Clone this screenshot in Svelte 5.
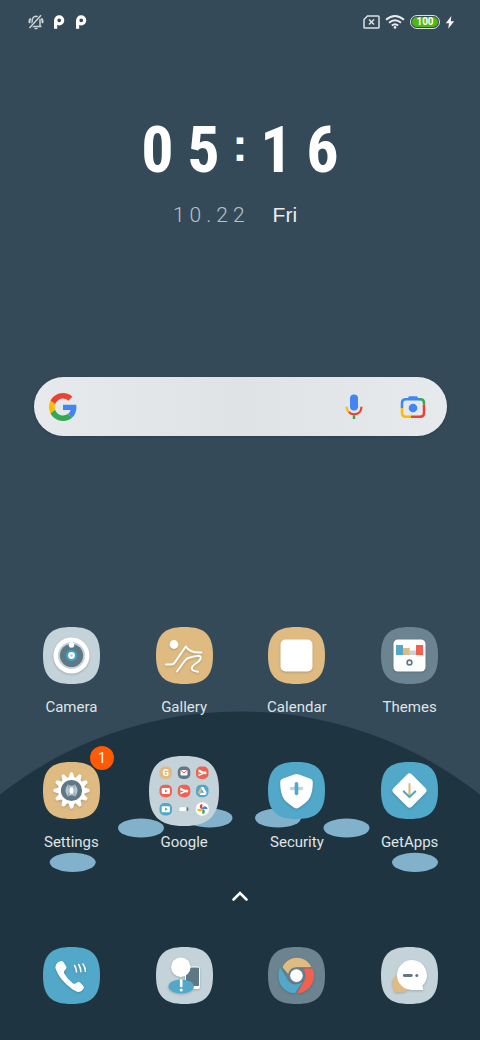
<script>
  const apps = [
    { id: 'camera', label: 'Camera' },
    { id: 'gallery', label: 'Gallery' },
    { id: 'calendar', label: 'Calendar' },
    { id: 'themes', label: 'Themes' },
    { id: 'settings', label: 'Settings', badge: 1 },
    { id: 'google', label: 'Google' },
    { id: 'security', label: 'Security' },
    { id: 'getapps', label: 'GetApps' }
  ];
  const dock = ['phone', 'contacts', 'chrome', 'messages'];
  const tints = {
    camera: '#c4d3d9', gallery: '#dfbb82', calendar: '#dfbb82', themes: '#6b8490',
    settings: '#dfbb82', security: '#52a8c8', getapps: '#52a8c8', phone: '#52a8c8',
    contacts: '#c4d3d9', chrome: '#6b8490', messages: '#c4d3d9'
  };
  const teeth = Array.from({ length: 12 }, (_, i) => i * 30);
  const time = ['0', '5', ':', '1', '6'];
  const date = ['1', '0', '.', '2', '2'];
</script>

{#snippet playTri(x, y)}
  <g transform="translate({x} {y})">
    <path d="M-3.5-3.5L4 0L-3.5 3.5z" fill="#fff" />
    <path d="M-3.5-.8L0 .6L-3.5 1.6z" fill="#f2604f" />
    <circle cx="3" cy="0" r="1.500" fill="#fff" />
  </g>
{/snippet}

{#snippet icon(id)}
  {#if id === 'google'}
    <svg width="70" height="70" viewBox="0 0 70 70" aria-hidden="true">
      <path d="M35 0C60 0 70 10 70 35S60 70 35 70S0 60 0 35S10 0 35 0z" fill="#c4d3d9" />
      <rect x="10.5" y="10.5" width="12.5" height="12.5" rx="5" fill="#dfbb82" />
      <text x="16.8" y="20.2" text-anchor="middle" class="mini-g">G</text>
      <rect x="28.8" y="10.5" width="12.5" height="12.5" rx="5" fill="#5f7886" />
      <rect x="31.5" y="14" width="7" height="5.4" rx=".8" fill="#fff" />
      <path d="M31.7 14.3l3.3 2.6l3.3-2.6" fill="none" stroke="#f2604f" stroke-width="1" />
      <rect x="47" y="10.5" width="12.5" height="12.5" rx="5" fill="#f2604f" />
      {@render playTri(53, 16.8)}
      <rect x="10.5" y="28.8" width="12.5" height="12.5" rx="5" fill="#f2604f" />
      <rect x="12.7" y="32" width="8.2" height="6" rx="1.2" fill="#fff" />
      <path d="M16 33.6l2.6 1.4l-2.6 1.4z" fill="#f2604f" />
      <rect x="28.8" y="28.8" width="12.5" height="12.5" rx="5" fill="#f2604f" />
      {@render playTri(34.8, 35)}
      <rect x="47" y="28.8" width="12.5" height="12.5" rx="5" fill="#52a8c8" />
      <path d="M51.8 31h2.6l3.4 5.8h-2.8z" fill="#fff" />
      <path d="M51.8 31l1.4 2.4l-2.8 5l-1.5-2z" fill="#dfbb82" />
      <path d="M51.8 36.8h6l-1.4 2.2h-5.8z" fill="#fff" />
      <rect x="10.5" y="47" width="12.5" height="12.5" rx="5" fill="#52a8c8" />
      <rect x="12.7" y="50.2" width="8.2" height="6" rx="1" fill="#fff" />
      <path d="M16 51.6l2.8 1.6l-2.8 1.6z" fill="#52a8c8" />
      <rect x="30.5" y="51.3" width="6.5" height="3.6" rx=".6" fill="#fff" />
      <rect x="37.7" y="51.3" width="1.6" height="3.6" rx=".6" fill="#5f7886" />
      <circle cx="53.3" cy="53" r="6.7" fill="#fff" />
      <path d="M53.3 53v-5a2.5 2.5 0 0 0 0 5z" fill="#ea4335" transform="rotate(90 53.3 53)" />
      <path d="M53.3 53v-5a2.5 2.5 0 0 0 0 5z" fill="#ea4335" />
      <path d="M53.3 53v-5a2.5 2.5 0 0 0 0 5z" fill="#4285f4" transform="rotate(90 53.3 53)" />
      <path d="M53.3 53v-5a2.5 2.5 0 0 0 0 5z" fill="#34a853" transform="rotate(180 53.3 53)" />
      <path d="M53.3 53v-5a2.5 2.5 0 0 0 0 5z" fill="#fbbc04" transform="rotate(270 53.3 53)" />
    </svg>
  {:else}
    <svg width="57" height="57" viewBox="0 0 57 57" aria-hidden="true">
      <path d="M28.5 0C49 0 57 8 57 28.5S49 57 28.5 57S0 49 0 28.5S8 0 28.5 0z" fill={tints[id]} />
      <g class="lift">
        {#if id === 'camera'}
          <circle cx="28.5" cy="28.5" r="18" fill="#fff" />
          <circle cx="28.5" cy="28.5" r="13.6" fill="#c4d3d9" />
          <circle cx="28.5" cy="28.5" r="11.6" fill="#5f7886" />
          <circle cx="28.5" cy="28.5" r="5.8" fill="#3f9fc2" />
          <circle cx="28.5" cy="28.5" r="3.4" fill="#fff" />
          <circle cx="28.5" cy="28.5" r="1.2" fill="#a7cfdf" />
          <circle cx="28.5" cy="18" r="2.8" fill="#fff" />
        {:else if id === 'gallery'}
          <circle cx="18" cy="17.5" r="4.4" fill="#fff" />
          <g fill="none" stroke="#fff" stroke-width="2" stroke-linecap="round" stroke-linejoin="round">
            <path d="M10 37.5h5.500q2 0 3-1.600L29.800 19.500Q33.500 26 45.500 25.500" />
            <path d="M21 44.500L29 33.500Q31 31 34 30.500Q44 27.500 44.700 30C46 35 35.500 37 35.700 41.500Q36 44 42 44.700" />
          </g>
        {:else if id === 'calendar'}
          <rect x="12.5" y="12.5" width="32" height="32" rx="5" fill="#fff" />
        {:else if id === 'themes'}
          <rect x="12.5" y="12.5" width="32" height="32" rx="4.5" fill="#fff" />
          <path d="M15 18h7v10h-7z" fill="#52a8c8" />
          <path d="M22 21h6.8v7H22z" fill="#dfbb82" />
          <path d="M28.8 23.5H35V28h-6.200z" fill="#c4d3d9" />
          <path d="M35 18h7v10h-7z" fill="#f2604f" />
          <circle cx="28.5" cy="35.5" r="2.400" fill="none" stroke="#5f7886" stroke-width="1.600" />
        {:else if id === 'settings'}
          <g fill="#fff">
            {#each teeth as angle}
              <path d="M25.500 16L27 10.700q1.500-.8 3 0L31.500 16z" transform="rotate({angle} 28.5 28.5)" />
            {/each}
            <circle cx="28.5" cy="28.5" r="13.500" />
          </g>
          <circle cx="28.5" cy="28.5" r="10.600" fill="#5f7886" />
          <path d="M25 22.500Q28.500 25 32 22.500Q37 28.500 32 34.500Q28.500 32 25 34.500Q20 28.500 25 22.500z" fill="#b4c5cc" />
          <path d="M24.500 22.500q4 6 0 12M32.500 22.500q-4 6 0 12" fill="none" stroke="#8ba0aa" stroke-width="1" />
          <rect x="26.500" y="25.500" width="4" height="6" rx="1.500" fill="#fff" />
        {:else if id === 'security'}
          <path d="M26 12.500q2.500-1.200 5 0l11.500 4.300q2.300 1 2.300 3.200c0 11-2.500 17.500-8.500 21.800l-5.500 4q-2.300 1.500-4.600 0l-5.500-4c-6-4.300-8.500-10.800-8.500-21.800q0-2.200 2.300-3.200z" fill="#fff" />
          <path d="M23.500 26.500h10" stroke="#c4d3d9" stroke-width="3.400" stroke-linecap="round" />
          <path d="M28.500 21.800v9.600" stroke="#52a8c8" stroke-width="3.600" stroke-linecap="round" />
        {:else if id === 'getapps'}
          <rect x="15.500" y="15.500" width="26" height="26" rx="3.500" fill="#fff" transform="rotate(45 28.5 28.5)" />
          <path d="M28.500 22v12" stroke="#dfbb82" stroke-width="2.200" stroke-linecap="round" />
          <path d="M22.800 29.500l5.700 5.500l5.700-5.500" fill="none" stroke="#52a8c8" stroke-width="2.200" stroke-linecap="round" stroke-linejoin="round" />
        {:else if id === 'phone'}
          <path d="M13.200 17.500Q14.500 14.500 18.500 14Q20 14 20.800 15.500L23.300 19.800Q24 21.200 22.800 22.300L21.200 24Q20.400 25 21.200 26.500Q25 33 30 36.400Q31.300 37.200 32.400 36.400L34.600 35.200Q36 34.600 37 35.600L40.300 39Q41.500 40.300 40.500 41.700Q38.800 44.500 36 45Q33.800 45.300 29 42Q16.500 33 12.500 21.500Q12.200 19.500 13.200 17.500z" fill="#fff" />
          <path d="M31.500 18.500q2 3.200 2 6.500M35.700 17.500q2.200 3.700 2.200 7.300M40 17q2.500 4 2.400 7.500" fill="none" stroke="#fff" stroke-width="1.500" stroke-linecap="round" />
        {:else if id === 'contacts'}
          <rect x="29.500" y="20" width="14" height="21.500" rx="1.500" fill="#5f7886" stroke="#fff" stroke-width="1" />
          <path d="M30 39h13.500v2.500H30z" fill="#fff" />
          <ellipse cx="25.200" cy="39.500" rx="12.700" ry="7" fill="#52a8c8" />
          <circle cx="24.800" cy="20.200" r="9.700" fill="#fff" />
          <path d="M25.200 33.500v5.500" stroke="#fff" stroke-width="2.600" stroke-linecap="round" />
          <circle cx="25.200" cy="43" r="1.500" fill="#fff" />
        {:else if id === 'chrome'}
          <path d="M14.800 19.500C20.500 8.500 36.500 7.500 43 19.200Q43.300 20.300 42 20.300H28.500Q21.700 20.800 20.500 26.500Q19.900 27.300 19.300 26.300L14.900 20.800z" fill="#dfbb82" />
          <path d="M12.800 21.600L20 33.500Q23.500 38 29 37.300L34 35.800L27.500 45.500Q26.800 46.300 25.500 46.200C13 44.500 8 32 11.500 22Q12 20.800 12.800 21.600z" fill="#52a8c8" />
          <path d="M35 21.600H44.300Q45 21.700 45.300 23C48.500 34 41 45.500 30 46.300Q29.300 46.200 29.700 45L36 34.500Q39 27 35 21.600z" fill="#f2604f" />
          <circle cx="28.400" cy="28.600" r="7.600" fill="#6b8490" />
          <circle cx="28.400" cy="28.600" r="6.300" fill="#fff" />
        {:else if id === 'messages'}
          <path d="M20 27A9 9 0 0 0 13.200 41.500V44.200Q13.200 45.300 14.500 45.300H20A9.500 9.500 0 0 0 28 41z" fill="#dfbb82" />
          <path d="M31 13A15 15 0 1 0 31 43H41.500Q42.500 42.800 42 41.500L41.500 38.500A15 15 0 0 0 31 13z" fill="#fff" />
          <path d="M23.300 28.500h7" stroke="#5f7886" stroke-width="2.800" stroke-linecap="round" />
          <circle cx="35.800" cy="28.500" r="1.500" fill="#5f7886" />
        {/if}
      </g>
    </svg>
  {/if}
{/snippet}

{#snippet parking()}
  <svg width="12" height="14" viewBox="0 0 12 14" fill="none" stroke="#fff" stroke-width="3.200" aria-hidden="true">
    <circle cx="6.200" cy="5.300" r="3.500" />
    <path d="M2.600 5V13.800" />
  </svg>
{/snippet}

<div class="screen">
  <svg class="wallpaper" viewBox="0 0 480 1040" preserveAspectRatio="xMidYMin slice" aria-hidden="true">
    <circle cx="240" cy="1100" r="388.500" fill="#1f3441" />
    <g fill="#82b1cb">
      <ellipse cx="141" cy="828" rx="23" ry="9.600" />
      <ellipse cx="209.500" cy="818" rx="23" ry="9.600" />
      <ellipse cx="278" cy="818" rx="23" ry="9.600" />
      <ellipse cx="346.500" cy="828" rx="23" ry="9.600" />
      <ellipse cx="72.700" cy="862.300" rx="23" ry="9.600" />
      <ellipse cx="415" cy="862.300" rx="23" ry="9.600" />
    </g>
  </svg>

  <header class="status">
    <div class="side notices">
      <svg width="16" height="16" viewBox="0 0 16 16" fill="none" stroke="#ccd3d7" stroke-width="1.500" aria-hidden="true">
        <path d="M3 12.500h10.500M4.200 12V6.500Q4.500 2.500 8 2.200Q11.800 2.500 12 6.500V12" />
        <path d="M2.800 4.500Q.5 6.800 2 9M13.300 4.500Q15.500 6.800 14 9" stroke-width="2" />
        <path d="M6.500 14.500h3" />
        <path d="M1.500 14L13 1.200" stroke="#354a58" stroke-width="3" />
        <path d="M1.500 14L13 1.200" />
      </svg>
      {@render parking()}
      {@render parking()}
    </div>
    <div class="side system">
      <svg width="17" height="14" viewBox="0 0 17 14" fill="none" stroke="#dce1e4" stroke-width="1.500" aria-hidden="true">
        <path d="M4.500 1H15.200Q16 1 16 1.800V12.200Q16 13 15.200 13H1.800Q1 13 1 12.200V4.500z" />
        <path d="M6 4.500l5 5M11 4.500l-5 5" />
      </svg>
      <svg width="20" height="14" viewBox="0 0 20 14" fill="none" stroke="#e8ecee" stroke-width="1.900" aria-hidden="true">
        <path d="M1 4.800Q10-2.800 19 4.800M4 7.800Q10 2.800 16 7.800M6.800 10.500Q10 7.800 13.200 10.500" />
        <circle cx="10" cy="12.400" r="1.300" fill="#e8ecee" stroke="none" />
      </svg>
      <span class="battery"><span>100</span></span>
      <svg width="10" height="13" viewBox="0 0 10 13" aria-hidden="true">
        <path d="M6.300 0L.8 7.200H4L3.200 12.800L9.200 5.200H5.800z" fill="#f2f4f5" />
      </svg>
    </div>
  </header>

  <section class="clock">
    <div class="time">
      {#each time as glyph}<span class:colon={glyph === ':'}>{glyph}</span>{/each}
    </div>
    <div class="day">
      <div class="date">{#each date as glyph}<span>{glyph}</span>{/each}</div>
      <span class="weekday">Fri</span>
    </div>
  </section>

  <form class="search">
    <button type="button" aria-label="Google">
      <svg width="28" height="28" viewBox="0 0 48 48" aria-hidden="true">
        <path fill="#ea4335" d="M24 9.500c3.540 0 6.710 1.220 9.210 3.600l6.850-6.850C35.900 2.380 30.470 0 24 0 14.620 0 6.510 5.380 2.560 13.220l7.980 6.190C12.430 13.720 17.740 9.500 24 9.500z" />
        <path fill="#4285f4" d="M46.980 24.550c0-1.570-.15-3.090-.38-4.550H24v9.020h12.940c-.58 2.960-2.260 5.480-4.780 7.180l7.730 6c4.510-4.180 7.090-10.360 7.090-17.650z" />
        <path fill="#fbbc05" d="M10.530 28.590c-.48-1.450-.76-2.990-.76-4.590s.27-3.140.76-4.590l-7.980-6.190C.92 16.460 0 20.120 0 24c0 3.880.92 7.540 2.560 10.780l7.970-6.190z" />
        <path fill="#34a853" d="M24 48c6.480 0 11.930-2.130 15.890-5.810l-7.730-6c-2.150 1.450-4.920 2.300-8.160 2.300-6.260 0-11.570-4.220-13.470-9.910l-7.980 6.190C6.510 42.620 14.620 48 24 48z" />
      </svg>
    </button>
    <input type="search" aria-label="Search" />
    <button type="button" aria-label="Voice search">
      <svg width="20" height="26" viewBox="0 0 20 26" fill="none" aria-hidden="true">
        <rect x="6" y=".5" width="8" height="16" rx="4" fill="#4285f4" />
        <path d="M2.500 12.700Q2.600 16 4.800 18.100" stroke="#fbbc05" stroke-width="2.200" />
        <path d="M4.800 18.100Q7 20.400 10 20.400Q17.200 20 17.500 12.700" stroke="#ea4335" stroke-width="2.200" />
        <path d="M10 21.300V25" stroke="#34a853" stroke-width="2.500" />
      </svg>
    </button>
    <button type="button" aria-label="Search by image">
      <svg width="26" height="24" viewBox="0 0 26 24" fill="none" stroke-width="2.500" aria-hidden="true">
        <path d="M2 13V8Q2 4.300 5.700 4.300H20" stroke="#4285f4" />
        <path d="M7 4.500L9 1.200H17L19 4.500z" fill="#4285f4" />
        <path d="M19 4.300H20.300Q24 4.300 24 8V9.500" stroke="#34a853" />
        <path d="M24 9.500V18Q24 21.700 20.300 21.700H11" stroke="#ea4335" />
        <path d="M2 13V18Q2 21.700 5.700 21.700H11" stroke="#fbbc05" />
        <circle cx="13" cy="13" r="4.300" fill="#4285f4" />
      </svg>
    </button>
  </form>

  <main class="apps">
    {#each apps as app}
      <button type="button" class="app">
        <span class="tile">
          {@render icon(app.id)}
          {#if app.badge}<span class="badge">{app.badge}</span>{/if}
        </span>
        <span class="label">{app.label}</span>
      </button>
    {/each}
  </main>

  <button type="button" class="drawer" aria-label="All apps">
    <svg width="18" height="12" viewBox="0 0 18 12" aria-hidden="true">
      <path d="M2.500 9.500L9 3L15.500 9.500" fill="none" stroke="#fff" stroke-width="2.600" stroke-linecap="round" />
    </svg>
  </button>

  <nav class="dock">
    {#each dock as id}
      <button type="button" class="app" aria-label={id}>
        <span class="tile">{@render icon(id)}</span>
      </button>
    {/each}
  </nav>
</div>

<style>
  :global(body) { background: #354a58; }
  .screen {
    position: relative;
    display: flex;
    flex-direction: column;
    min-height: 100vh;
    box-sizing: border-box;
    overflow: hidden;
    background: #354a58;
    color: #fff;
    font-family: Roboto, sans-serif;
  }
  .wallpaper { position: absolute; inset: 0; width: 100%; height: 100%; }
  .screen > :not(.wallpaper) { position: relative; }
  svg { display: block; flex: none; }
  button {
    margin: 0;
    padding: 0;
    border: 0;
    background: none;
    color: inherit;
    font: inherit;
    cursor: pointer;
  }
  .status {
    display: flex;
    justify-content: space-between;
    align-items: center;
    height: 44px;
    padding: 0 25px 0 28px;
  }
  .side { display: flex; align-items: center; }
  .notices { gap: 10px; }
  .notices svg:first-child { margin-right: -1px; }
  .system { gap: 5px; }
  .battery {
    display: flex;
    box-sizing: border-box;
    width: 30px;
    height: 14px;
    padding: 1px;
    border: 1px solid #dce1e4;
    border-radius: 7px;
  }
  .battery span {
    flex: 1;
    border-radius: 5px;
    background: #4fb712;
    font-size: 10px;
    font-weight: 700;
    line-height: 10px;
    text-align: center;
  }
  .clock {
    display: flex;
    flex-direction: column;
    align-items: center;
    padding-top: 75px;
  }
  .time {
    display: flex;
    align-items: center;
    gap: 17px;
    font-family: "Liberation Sans Narrow", "Roboto Condensed", "Liberation Sans", sans-serif;
    font-size: 64px;
    font-weight: 700;
    line-height: 64px;
  }
  .time span { display: flex; justify-content: center; width: 29px; }
  .time .colon {
    width: 10px;
    padding-bottom: 12px;
    font-family: "Liberation Sans", sans-serif;
    font-size: 46px;
    line-height: 46px;
  }
  .day {
    display: flex;
    align-items: center;
    gap: 28px;
    margin-top: 20px;
    padding-right: 10px;
    font-size: 21px;
    line-height: 24px;
  }
  .date { display: flex; gap: 5px; color: #b8c2c8; font-weight: 300; }
  .weekday { color: #e9edef; font-family: "Liberation Sans", sans-serif; }
  .search {
    display: flex;
    align-items: center;
    gap: 32px;
    height: 59px;
    box-sizing: border-box;
    margin: 150px 33px 0 34px;
    padding: 0 21px 0 15px;
    border-radius: 30px;
    background: linear-gradient(90deg, #e7eaec, #dfe3e6 50%, #e7eaec);
    box-shadow: 0 1px 3px #1f344166;
  }
  .search input {
    flex: 1;
    min-width: 0;
    height: 40px;
    border: 0;
    outline: 0;
    background: transparent;
    font: 18px Roboto, sans-serif;
  }
  .search button:last-child { margin-left: 4px; }
  .apps, .dock {
    display: grid;
    grid-template-columns: repeat(4, 1fr);
    padding: 0 14px 0 15px;
  }
  .apps { row-gap: 45px; margin-top: 191px; }
  .app { display: flex; flex-direction: column; align-items: center; gap: 13px; }
  .tile {
    position: relative;
    display: flex;
    justify-content: center;
    align-items: center;
    width: 57px;
    height: 57px;
  }
  .lift { filter: drop-shadow(0 1px 1px #1f344140); }
  .mini-g { fill: #fff; font: 700 9px Roboto, sans-serif; }
  .badge {
    position: absolute;
    top: -16px;
    right: -14px;
    width: 24px;
    height: 24px;
    border-radius: 50%;
    background: #ff5a05;
    font-size: 14px;
    line-height: 24px;
    text-align: center;
  }
  .label { color: #dfe4e6; font-size: 15px; line-height: 20px; }
  .drawer { align-self: center; margin-top: 38px; }
  .dock { margin-top: 45px; padding-bottom: 36px; }
</style>
